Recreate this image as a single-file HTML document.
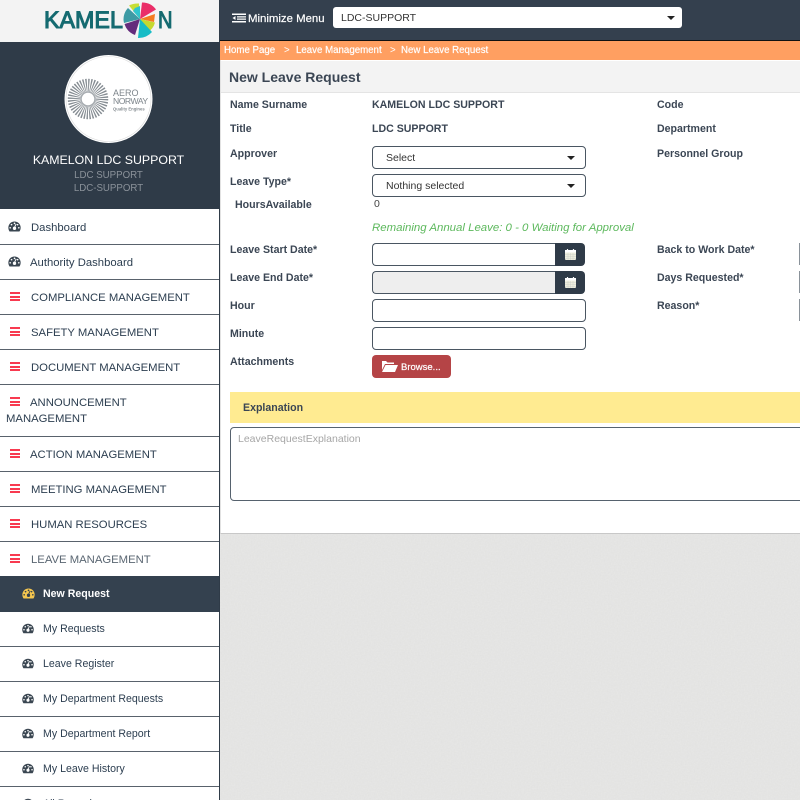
<!DOCTYPE html>
<html>
<head>
<meta charset="utf-8">
<style>
*{box-sizing:border-box}
html,body{margin:0;padding:0;width:800px;height:800px;overflow:hidden;background:#e6e6e5;font-family:"Liberation Sans",sans-serif}
.a{position:absolute;white-space:nowrap}
#side{position:absolute;left:0;top:0;width:220px;height:800px;background:#fff;border-right:1px solid #2f3b48;overflow:hidden}
.mi{position:absolute;left:0;width:219px;border-bottom:1px solid #59626c;font-size:11.3px;color:#2c3e50;line-height:14px}
.mi .t{margin-top:1px}
.mi.sub .t{margin-top:0}
.sub{font-size:10.6px}
.mi svg,.mi b{position:absolute}
.bars{position:absolute;left:10px;width:10px;height:9px;border-top:2px solid #f83a50;border-bottom:2px solid #f83a50}
.bars:after{content:"";position:absolute;left:0;right:0;top:1.5px;height:2px;background:#f83a50}
.t{position:absolute;white-space:nowrap}
.lb{position:absolute;white-space:nowrap;font-size:10.6px;font-weight:bold;color:#3b4654;line-height:13px;margin-top:1px}
.in{position:absolute;left:372px;width:214px;height:23px;border:1px solid #4a5662;border-radius:4px;background:#fff;font-size:10.5px;color:#333;line-height:22px;padding-left:13px}
.car{position:absolute;right:10px;top:9px;width:0;height:0;border-left:4px solid transparent;border-right:4px solid transparent;border-top:4px solid #222}
.cal{position:absolute;left:555px;width:30px;height:23px;background:#2f3b48;border-radius:0 4px 4px 0}
.bc{position:absolute;top:44px;font-size:9.7px;line-height:14px;color:#fff;white-space:nowrap}
.st{-webkit-text-stroke:.2px #fff}
</style>
</head>
<body>
<svg width="0" height="0" style="position:absolute">
<symbol id="g" viewBox="0 0 14 12"><path d="M7 .5C3.2 .5 .3 3.500 .3 7.200c0 1.600 .5 3 1.300 4.300h10.800c.8-1.300 1.300-2.700 1.300-4.300C13.700 3.500 10.800 .5 7 .5z" fill="currentColor"/><circle cx="7" cy="8" r="1.800" fill="var(--h,#fff)"/><path d="M6.600 8L8.800 3.200" stroke="var(--h,#fff)" stroke-width="1"/><circle cx="7" cy="2.600" r=".9" fill="var(--h,#fff)"/><circle cx="3.800" cy="4" r=".9" fill="var(--h,#fff)"/><circle cx="10.400" cy="4" r=".9" fill="var(--h,#fff)"/><circle cx="2.300" cy="7.400" r=".9" fill="var(--h,#fff)"/><circle cx="11.700" cy="7.400" r=".9" fill="var(--h,#fff)"/></symbol>
<filter id="spk"><feTurbulence type="fractalNoise" baseFrequency="0.7" numOctaves="2" seed="4"/><feColorMatrix values="0 0 0 0 .55  0 0 0 0 .55  0 0 0 0 .53  0 0 0 .22 -.06"/></filter>
</svg>
<svg class="a" style="left:220px;top:534px" width="580" height="266"><rect width="580" height="266" filter="url(#spk)"/></svg>

<div id="side">
  <div class="a" style="left:0;top:0;width:219px;height:42px;background:#f3f3f3"></div>
  <div class="a" style="left:44px;top:6px;font-size:24.5px;line-height:30px;color:#156a70;transform:scaleX(.95);transform-origin:0 0;-webkit-text-stroke:1.1px #156a70">KAMEL</div>
  <div class="a" style="left:158px;top:6px;font-size:24.5px;line-height:30px;color:#156a70;transform:scaleX(.82);transform-origin:0 0;-webkit-text-stroke:1.1px #156a70">N</div>
  <svg class="a" style="left:121px;top:0" width="40" height="40" viewBox="0 0 40 40">
    <path d="M19 19L21 2.500A17 17 0 0 1 35 9.500Z" fill="#ea2e68"/>
    <path d="M19 19L34 14L33 22Z" fill="#f47b20"/>
    <path d="M19 19L34 22.500A16 16 0 0 1 27 32Z" fill="#c5d92f"/>
    <path d="M19 19L31 32A18 18 0 0 1 17 38Z" fill="#18bcc6"/>
    <path d="M19 19L14 35A17 17 0 0 1 3.500 24Z" fill="#642c7c"/>
    <path d="M19 19L3 23A16 16 0 0 1 7 8Z" fill="#3d9aa4"/>
    <path d="M19 19L8 5.500A19 19 0 0 1 18 3.500Z" fill="#c7de35"/>
    <path d="M19 19L12 11L14 8L19 6Z" fill="#2fc4cd"/>
  </svg>

  <div class="a" style="left:0;top:42px;width:219px;height:167px;background:#2f3b48"></div>
  <svg class="a" style="left:64px;top:54px" width="90" height="90" viewBox="0 0 90 90">
    <circle cx="44.500" cy="45" r="44" fill="#fff"/>
    <circle cx="44.500" cy="45" r="42.500" fill="none" stroke="#d8d8d8" stroke-width=".6"/>
    <circle cx="24" cy="45" r="14" fill="none" stroke="#858c92" stroke-width="12.500" stroke-dasharray="1.100 1.100"/>
    <circle cx="24" cy="45" r="7" fill="none" stroke="#a7acb0" stroke-width="1.500"/>
    <text x="49" y="42" font-size="9" fill="#7d858b" font-family="Liberation Sans">AERO</text>
    <text x="49" y="50" font-size="8.600" fill="#7d858b" font-family="Liberation Sans" letter-spacing="-.5">NORWAY</text>
    <text x="49" y="56.500" font-size="4.200" font-weight="bold" fill="#868d92" font-family="Liberation Sans">Quality Engines</text>
  </svg>
  <div class="a" style="left:0;width:217px;top:153px;text-align:center;font-size:12.35px;line-height:15px;color:#fff">KAMELON LDC SUPPORT</div>
  <div class="a" style="left:0;width:217px;top:169px;text-align:center;font-size:9.7px;line-height:13px;color:#8b929a">LDC SUPPORT</div>
  <div class="a" style="left:0;width:217px;top:182px;text-align:center;font-size:9.7px;line-height:13px;color:#8b929a">LDC-SUPPORT</div>

  <div class="mi" style="top:209px;height:36px"><svg style="left:8px;top:12px;color:#3a4651" width="13" height="11"><use href="#g"/></svg><span class="t" style="left:31px;top:11px">Dashboard</span></div>
  <div class="mi" style="top:245px;height:35px"><svg style="left:8px;top:11px;color:#3a4651" width="13" height="11"><use href="#g"/></svg><span class="t" style="left:30px;top:10px">Authority Dashboard</span></div>
  <div class="mi" style="top:280px;height:35px"><i class="bars" style="top:12px"></i><span class="t" style="left:31px;top:10px">COMPLIANCE MANAGEMENT</span></div>
  <div class="mi" style="top:315px;height:35px"><i class="bars" style="top:12px"></i><span class="t" style="left:31px;top:10px">SAFETY MANAGEMENT</span></div>
  <div class="mi" style="top:350px;height:35px"><i class="bars" style="top:12px"></i><span class="t" style="left:31px;top:10px">DOCUMENT MANAGEMENT</span></div>
  <div class="mi" style="top:385px;height:52px"><i class="bars" style="top:12px"></i><span class="t" style="left:30px;top:10px">ANNOUNCEMENT</span><span class="t" style="left:6px;top:26px">MANAGEMENT</span></div>
  <div class="mi" style="top:437px;height:35px"><i class="bars" style="top:12px"></i><span class="t" style="left:30px;top:10px">ACTION MANAGEMENT</span></div>
  <div class="mi" style="top:472px;height:35px"><i class="bars" style="top:12px"></i><span class="t" style="left:31px;top:10px">MEETING MANAGEMENT</span></div>
  <div class="mi" style="top:507px;height:35px"><i class="bars" style="top:12px"></i><span class="t" style="left:31px;top:10px">HUMAN RESOURCES</span></div>
  <div class="mi" style="top:542px;height:34px;border:0;color:#5a6672"><i class="bars" style="top:12px"></i><span class="t" style="left:31px;top:10px">LEAVE MANAGEMENT</span></div>
  <div class="mi sub" style="top:576px;height:36px;background:#34414f;border:0;color:#fff;font-weight:bold;--h:#34414f"><svg style="left:22px;top:12px;color:#f5c64f" width="13" height="11"><use href="#g"/></svg><span class="t" style="left:43px;top:11px">New Request</span></div>
  <div class="mi sub" style="top:612px;height:35px"><svg style="left:22px;top:11px;color:#3a4651" width="12" height="11"><use href="#g"/></svg><span class="t" style="left:43px;top:10px">My Requests</span></div>
  <div class="mi sub" style="top:647px;height:35px"><svg style="left:22px;top:11px;color:#3a4651" width="12" height="11"><use href="#g"/></svg><span class="t" style="left:43px;top:10px">Leave Register</span></div>
  <div class="mi sub" style="top:682px;height:35px"><svg style="left:22px;top:11px;color:#3a4651" width="12" height="11"><use href="#g"/></svg><span class="t" style="left:43px;top:10px">My Department Requests</span></div>
  <div class="mi sub" style="top:717px;height:35px"><svg style="left:22px;top:11px;color:#3a4651" width="12" height="11"><use href="#g"/></svg><span class="t" style="left:43px;top:10px">My Department Report</span></div>
  <div class="mi sub" style="top:752px;height:35px"><svg style="left:22px;top:11px;color:#3a4651" width="12" height="11"><use href="#g"/></svg><span class="t" style="left:43px;top:10px">My Leave History</span></div>
  <div class="mi sub" style="top:787px;height:35px;border:0"><svg style="left:22px;top:11px;color:#3a4651" width="12" height="11"><use href="#g"/></svg><span class="t" style="left:43px;top:10px">All Records</span></div>
</div>

<!-- top bar -->
<div class="a" style="left:220px;top:0;width:580px;height:41px;background:#34404e;border-bottom:1px solid #111"></div>
<svg class="a" style="left:232px;top:13px" width="14" height="10" viewBox="0 0 14 10"><path d="M0 .5h14v1.500H0zM5 3.200h9v1.300H5zM5 5.500h9v1.300H5zM0 8h14v1.500H0z" fill="#fff"/><path d="M3.500 3v4L.5 5z" fill="#fff"/></svg>
<div class="a" style="left:248px;top:12px;font-size:11.4px;line-height:14px;color:#fff;-webkit-text-stroke:.2px #fff">Minimize Menu</div>
<div class="a" style="left:333px;top:7px;width:349px;height:21px;background:#fff;border-radius:3px;font-size:10.5px;line-height:22px;color:#333;padding-left:8px">LDC-SUPPORT<i class="car" style="right:7px;top:9px;border-left-width:4.500px;border-right-width:4.500px"></i></div>

<!-- breadcrumb -->
<div class="a" style="left:220px;top:41px;width:580px;height:19px;background:#ff9f61"></div>
<div class="bc st" style="left:224px">Home Page</div>
<div class="bc" style="left:284px">&gt;</div>
<div class="bc st" style="left:296px">Leave Management</div>
<div class="bc" style="left:390px">&gt;</div>
<div class="bc st" style="left:401px">New Leave Request</div>

<!-- main panel -->
<div class="a" style="left:220px;top:60px;width:580px;height:474px;background:#fff;border-bottom:1px solid #c8c8c8;border-left:1px solid #e2e2e2"></div>
<div class="a" style="left:221px;top:61px;width:579px;height:32px;background:#f3f3f3;border-bottom:1px solid #e4e4e4"></div>
<div class="a" style="left:229px;top:69px;font-size:14px;font-weight:bold;line-height:16px;color:#3b4654">New Leave Request</div>

<div class="lb" style="left:230px;top:98px">Name Surname</div>
<div class="lb" style="left:372px;top:98px">KAMELON LDC SUPPORT</div>
<div class="lb" style="left:657px;top:98px">Code</div>
<div class="lb" style="left:230px;top:122px">Title</div>
<div class="lb" style="left:372px;top:122px">LDC SUPPORT</div>
<div class="lb" style="left:657px;top:122px">Department</div>
<div class="lb" style="left:230px;top:147px">Approver</div>
<div class="lb" style="left:657px;top:147px">Personnel Group</div>
<div class="lb" style="left:230px;top:175px">Leave Type*</div>
<div class="lb" style="left:235px;top:198px">HoursAvailable</div>
<div class="a" style="left:374px;top:198px;font-size:10.5px;line-height:13px;color:#444">0</div>

<div class="in" style="top:146px">Select<i class="car"></i></div>
<div class="in" style="top:174px">Nothing selected<i class="car"></i></div>

<div class="a" style="left:372px;top:221px;font-size:11.43px;line-height:15px;font-style:italic;color:#5cb85c">Remaining Annual Leave: 0 - 0 Waiting for Approval</div>

<div class="lb" style="left:230px;top:243px">Leave Start Date*</div>
<div class="lb" style="left:230px;top:271px">Leave End Date*</div>
<div class="lb" style="left:230px;top:299px">Hour</div>
<div class="lb" style="left:230px;top:327px">Minute</div>
<div class="lb" style="left:230px;top:355px">Attachments</div>
<div class="lb" style="left:657px;top:243px">Back to Work Date*</div>
<div class="lb" style="left:657px;top:271px">Days Requested*</div>
<div class="lb" style="left:657px;top:299px">Reason*</div>

<div class="in" style="top:243px;width:185px;border-radius:4px 0 0 4px;border-right:0"></div>
<div class="cal" style="top:243px"><svg class="a" style="left:10px;top:6px" width="11" height="11" viewBox="0 0 11 11"><rect y="1" width="11" height="10" rx="1" fill="#eeeedd"/><rect y="1" width="11" height="2.500" fill="#fff"/><path d="M2.500 0v2M8.500 0v2" stroke="#fff" stroke-width="1.200"/><path d="M0 5.500h11M0 7.500h11M0 9.500h11M3 4v7M5.500 4v7M8 4v7" stroke="#c6cac6" stroke-width=".4"/></svg></div>
<div class="in" style="top:271px;width:185px;border-radius:4px 0 0 4px;border-right:0;background:#eee"></div>
<div class="cal" style="top:271px"><svg class="a" style="left:10px;top:6px" width="11" height="11" viewBox="0 0 11 11"><rect y="1" width="11" height="10" rx="1" fill="#eeeedd"/><rect y="1" width="11" height="2.500" fill="#fff"/><path d="M2.500 0v2M8.500 0v2" stroke="#fff" stroke-width="1.200"/><path d="M0 5.500h11M0 7.500h11M0 9.500h11M3 4v7M5.500 4v7M8 4v7" stroke="#c6cac6" stroke-width=".4"/></svg></div>
<div class="in" style="top:299px"></div>
<div class="in" style="top:327px"></div>

<div class="a" style="left:799px;top:243px;width:1px;height:22px;background:#8a929a"></div>
<div class="a" style="left:799px;top:271px;width:1px;height:22px;background:#8a929a"></div>
<div class="a" style="left:799px;top:299px;width:1px;height:22px;background:#8a929a"></div>

<div class="a" style="left:372px;top:355px;width:79px;height:23px;background:#b54446;border-radius:4px"></div>
<svg class="a" style="left:381px;top:360px" width="17" height="12" viewBox="0 0 17 12"><path d="M1 1h4l1.500 1.500H13V4H4L1 10z" fill="#fff"/><path d="M4.500 5H17l-3 7H1z" fill="#fff"/></svg>
<div class="a" style="left:401px;top:361px;font-size:9.5px;line-height:13px;color:#fff;-webkit-text-stroke:.2px #fff">Browse...</div>

<div class="a" style="left:230px;top:392px;width:570px;height:31px;background:#ffeb91"></div>
<div class="lb" style="left:243px;top:401px">Explanation</div>
<div class="a" style="left:230px;top:427px;width:580px;height:74px;border:1px solid #56626e;border-radius:4px;background:#fff"></div>
<div class="a" style="left:238px;top:432px;font-size:10.5px;line-height:14px;color:#a6a6a6">LeaveRequestExplanation</div>
</body>
</html>
